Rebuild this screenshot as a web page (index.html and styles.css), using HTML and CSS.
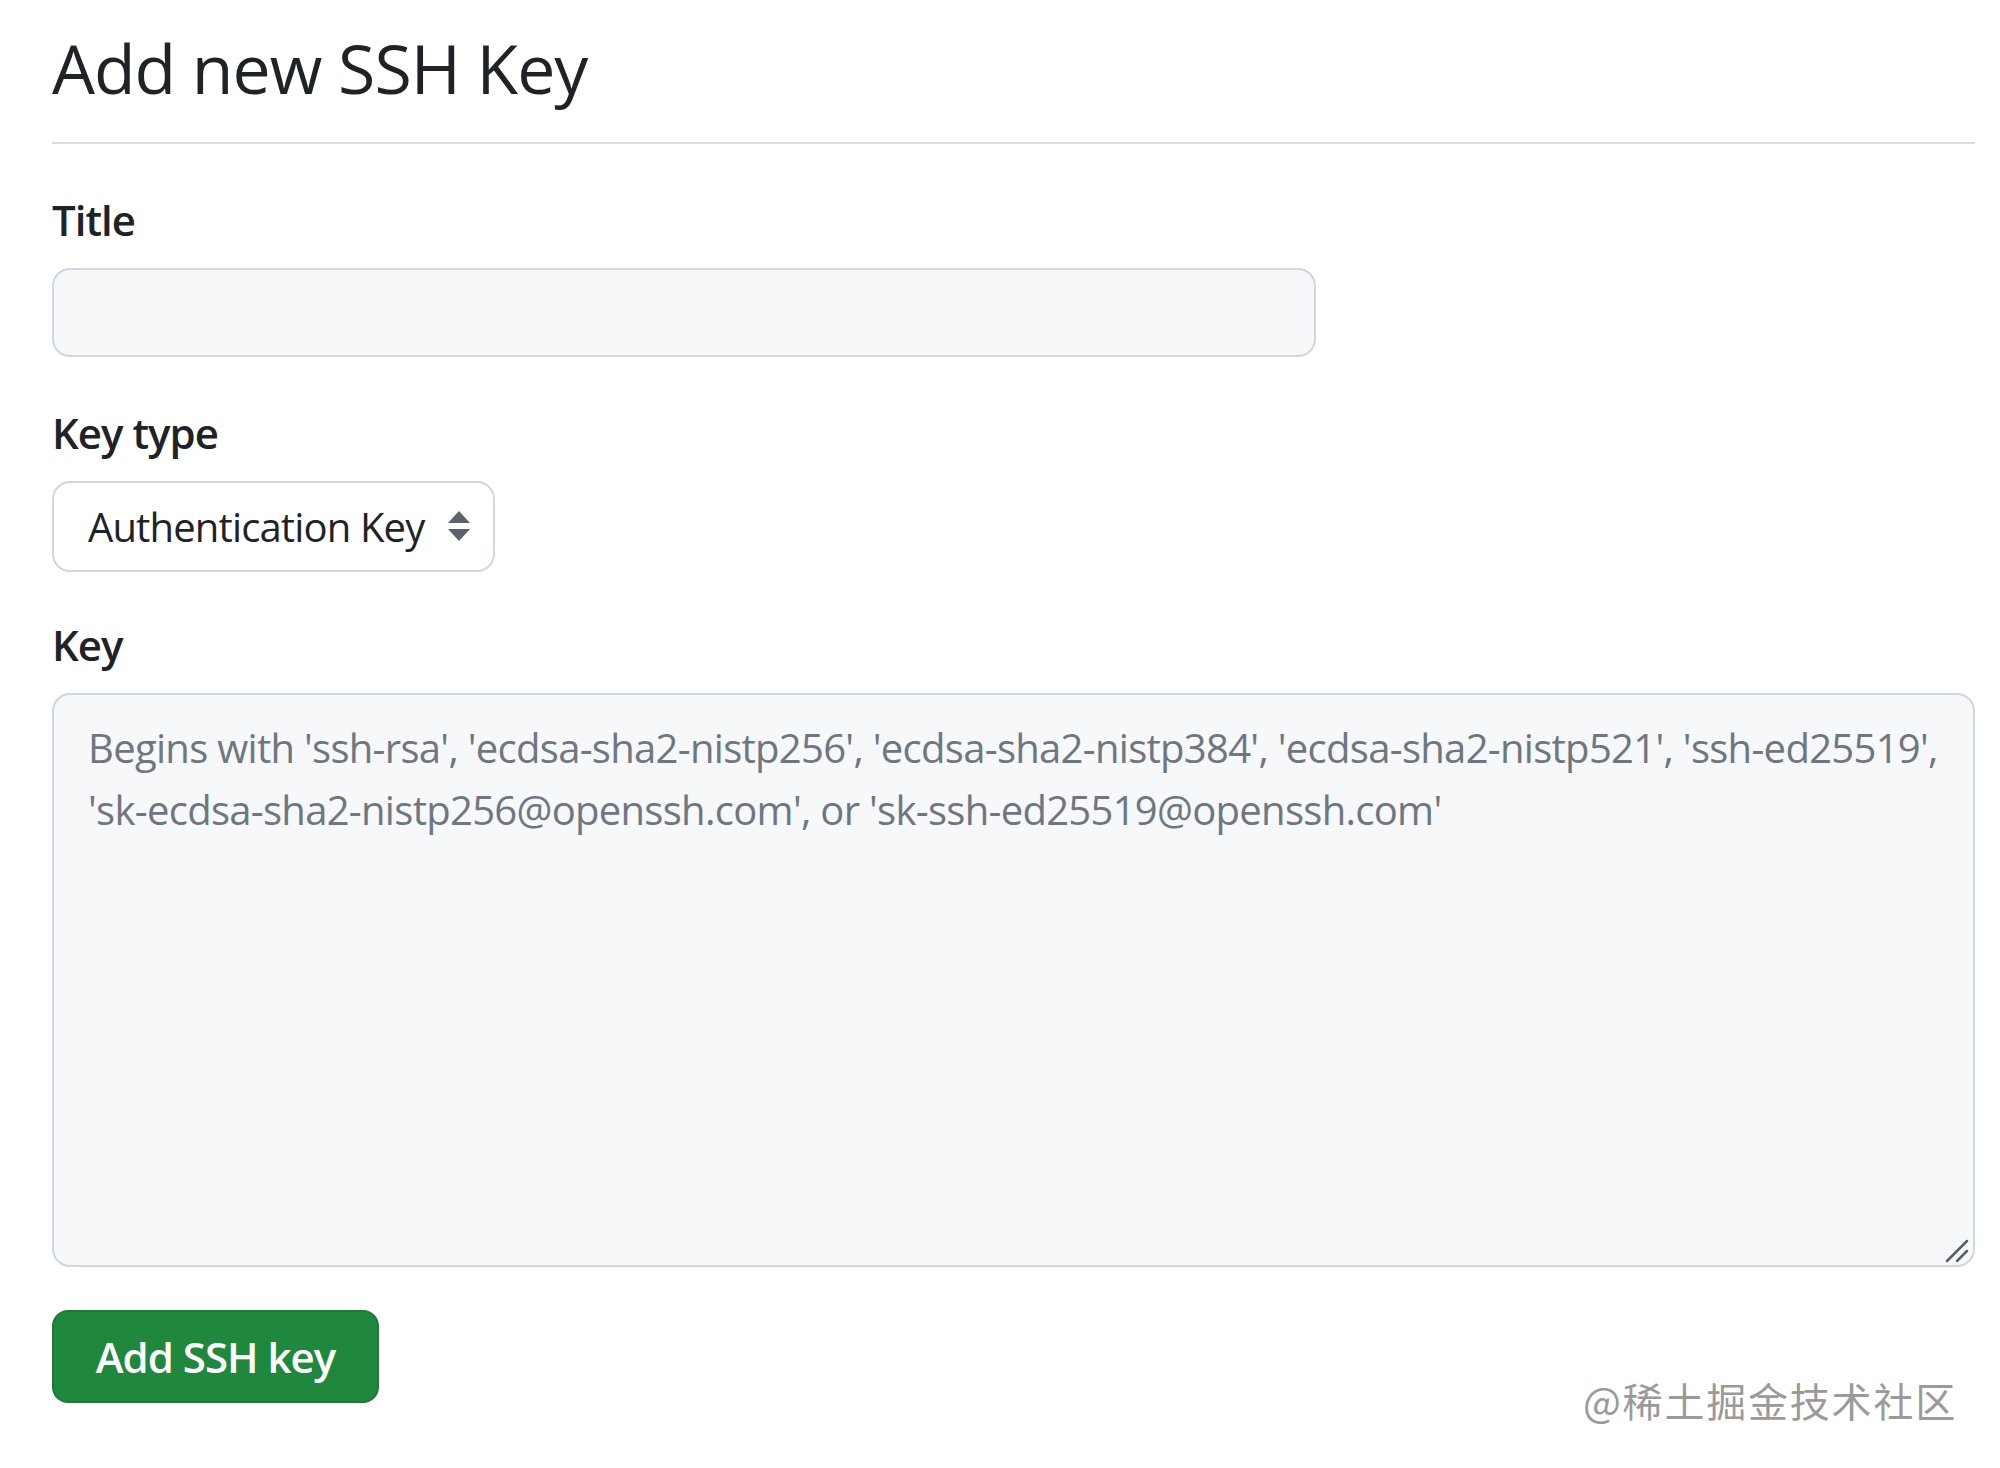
FILE: index.html
```html
<!DOCTYPE html>
<html lang="en">
<head>
<meta charset="utf-8">
<title>Add new SSH Key</title>
<link rel="stylesheet" href="styles.css">
</head>
<body>
<main class="page">
  <h2 class="heading">Add new SSH Key</h2>
  <form class="form">
    <div class="field">
      <label class="label" for="ssh-title">Title</label>
      <input class="input input-title" id="ssh-title" type="text">
    </div>
    <div class="field">
      <label class="label" for="ssh-type">Key type</label>
      <div class="select-wrap">
        <select class="select" id="ssh-type">
          <option>Authentication Key</option>
          <option>Signing Key</option>
        </select>
        <svg class="select-arrows" width="22" height="30" viewBox="0 0 22 30" aria-hidden="true">
          <path d="M11 0 L22 12 L0 12 Z" fill="#59636e"/>
          <path d="M0 18 L22 18 L11 30 Z" fill="#59636e"/>
        </svg>
      </div>
    </div>
    <div class="field">
      <label class="label label-key" for="ssh-key">Key</label>
      <div class="textarea-wrap">
        <textarea class="input textarea" id="ssh-key" placeholder="Begins with 'ssh-rsa', 'ecdsa-sha2-nistp256', 'ecdsa-sha2-nistp384', 'ecdsa-sha2-nistp521', 'ssh-ed25519', 'sk-ecdsa-sha2-nistp256@openssh.com', or 'sk-ssh-ed25519@openssh.com'"></textarea>
        <svg class="resize-grip" width="24" height="24" viewBox="0 0 24 24" aria-hidden="true">
          <path d="M2 22 L22 2" stroke="#57606a" stroke-width="2.5" stroke-linecap="round"/>
          <path d="M12 22 L22 12" stroke="#57606a" stroke-width="2.5" stroke-linecap="round"/>
        </svg>
      </div>
    </div>
    <div class="actions">
      <button class="btn-primary" type="submit">Add SSH key</button>
    </div>
  </form>
  <div class="watermark">@稀土掘金技术社区</div>
</main>
</body>
</html>
```
FILE: styles.css
```css
* { box-sizing: border-box; }
html, body { margin: 0; padding: 0; background: #ffffff; }
body {
  font-family: "Open Sans", "Noto Sans", "Liberation Sans", sans-serif;
  color: #1f2328;
}
.page {
  position: relative;
  width: 2000px;
  height: 1468px;
  padding: 0 25px 0 52px;
}
.heading {
  margin: 0;
  padding-top: 23px;
  font-size: 68px;
  font-weight: 400;
  line-height: 90px;
  height: 144px;
  border-bottom: 2px solid #d8dee4;
  letter-spacing: -1px;
}
.form {
  display: flex;
  flex-direction: column;
}
.field {
  display: flex;
  flex-direction: column;
}
.label {
  display: block;
  font-size: 42px;
  font-weight: 600;
  line-height: 60px;
  margin-top: 46px;
  margin-bottom: 18px;
  letter-spacing: -1px;
}
.label-key { margin-top: 43px; }
.input {
  font-family: inherit;
  background: #f6f8fa;
  border: 2px solid #d0d7de;
  border-radius: 18px;
  outline: none;
}
.input-title {
  width: 1264px;
  height: 89px;
}
.select-wrap {
  position: relative;
  width: 443px;
  height: 91px;
}
.select {
  -webkit-appearance: none;
  appearance: none;
  width: 100%;
  height: 100%;
  font-family: inherit;
  font-size: 40px;
  color: #1f2328;
  background: #ffffff;
  border: 2px solid #d0d7de;
  border-radius: 18px;
  padding: 0 60px 0 34px;
  letter-spacing: -0.85px;
}
.select-arrows {
  position: absolute;
  right: 25px;
  top: 30px;
}
.textarea-wrap {
  position: relative;
  width: 1923px;
  height: 574px;
}
.textarea {
  width: 100%;
  height: 100%;
  resize: none;
  font-size: 40px;
  line-height: 62px;
  padding: 22px 34px 14px;
  letter-spacing: -0.7px;
  color: #1f2328;
}
.textarea::placeholder {
  color: #6e7781;
}
.resize-grip {
  position: absolute;
  right: 6px;
  bottom: 4px;
}
.actions {
  display: flex;
  margin-top: 43px;
}
.btn-primary {
  width: 327px;
  height: 93px;
  background: #1f883d;
  color: #ffffff;
  border: 2px solid rgba(31, 35, 40, 0.15);
  border-radius: 16px;
  font-family: inherit;
  font-size: 42px;
  font-weight: 600;
  letter-spacing: -1px;
  padding: 0;
}
.watermark {
  position: absolute;
  right: 43px;
  top: 1374px;
  font-family: "Noto Sans CJK SC", sans-serif;
  font-size: 40px;
  line-height: 52px;
  color: #9a9a9a;
  letter-spacing: 1.8px;
}
```
